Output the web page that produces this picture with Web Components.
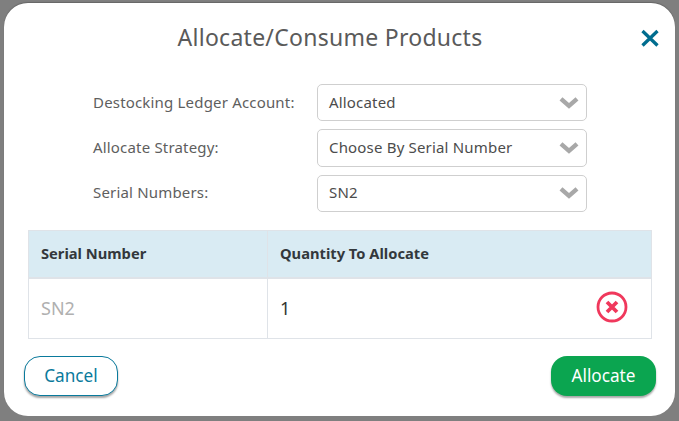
<!doctype html>
<html><head><meta charset="utf-8"><title>Allocate/Consume Products</title>
<style>
html,body{margin:0;height:100%;background:#7f7f7f}
body{font-family:"Noto Sans","Open Sans",sans-serif;overflow:hidden}
</style></head><body>
<template id="t-dialog"><style>
:host{display:flex;flex-direction:column;box-sizing:border-box;width:671px;height:413px;margin:3px 0 0 4px;background:#fff;border-radius:24px;position:relative;box-shadow:0 -1px 1px #666;color:#5b5b5b}
header{height:81px;display:flex;justify-content:center;padding-right:19px;box-sizing:border-box}
h1{margin:0;padding-top:17px;font-size:23px;line-height:34px;font-weight:400;letter-spacing:.27px;color:#5a5a5a}
.close{position:absolute;left:636px;top:25px;width:20px;height:20px}
.form{display:flex;flex-direction:column;gap:8px;padding-left:89px}
.table{margin:18px 23px 0 24px}
.foot{display:flex;justify-content:space-between;padding:17px 19px 0 20px}
</style>
<header><h1><slot name="title"></slot></h1></header>
<svg class="close" viewBox="0 0 20 20"><path d="M2.500 3 17.500 17.500M17.500 3 2.500 17.500" stroke="#006d8f" stroke-width="3.300" fill="none"/></svg>
<div class="form"><slot name="form"></slot></div>
<div class="table"><slot name="table"></slot></div>
<div class="foot"><slot name="actions"></slot></div>
</template>

<template id="t-field"><style>
:host{display:grid;grid-template-columns:224px 270px;align-items:center;font-size:15px}
label{color:#5e5e5e;letter-spacing:.18px;position:relative;top:-1.200px}
.sel{box-sizing:border-box;height:37.400px;border:1px solid #cfcfcf;border-radius:5px;display:flex;align-items:center;justify-content:space-between;padding:0 6.500px 0 11px;color:#4c4c4c;letter-spacing:.18px}
.sel span{position:relative;top:-1.200px}
svg{width:22px;height:14px}
</style>
<label><slot name="label"></slot></label>
<div class="sel"><span><slot></slot></span><svg viewBox="0 0 22 14"><path d="M3 2.800 11 9.800 19 2.800" fill="none" stroke="#a8a8a8" stroke-width="4.400"/></svg></div>
</template>

<template id="t-table"><style>
:host{display:block;box-sizing:border-box;height:109px;border:1px solid #dfe3e8;border-top-color:#dfe3e8}
.row{display:grid;grid-template-columns:238px 1fr}
.head{height:46px;background:#d9ebf3;border-bottom:2px solid #dfe3e8;box-sizing:content-box}
.cell{display:flex;align-items:center;padding-left:12px;box-sizing:border-box}
.cell+.cell{border-left:1px solid #dfe3e8}
.head .cell{font-size:14.700px;font-weight:700;color:#33383c;padding-bottom:3px}
.body{height:59px}
.body .cell{justify-content:space-between;padding-right:23px}
.sn{font-size:18px;color:#b0b0b0;padding-bottom:1px}
.qty{font-size:18px;color:#333;padding-bottom:2px}
svg{width:32px;height:32px;position:relative;top:-1px}
</style>
<div class="row head"><div class="cell"><slot name="h1"></slot></div><div class="cell"><slot name="h2"></slot></div></div>
<div class="row body"><div class="cell sn"><slot name="c1"></slot></div><div class="cell qty"><slot name="c2"></slot>
<svg viewBox="0 0 32 32"><circle cx="16" cy="16" r="14" fill="none" stroke="#f0385c" stroke-width="2.800"/><path d="M11 11 21 21M21 11 11 21" stroke="#f0385c" stroke-width="3.800" fill="none"/></svg></div></div>
</template>

<template id="t-btn"><style>
:host{display:flex;align-items:center;justify-content:center;box-sizing:border-box;height:40px;border-radius:16px;font-size:17.200px;box-shadow:0 2px 2px rgba(0,0,0,.35)}
span{position:relative;top:-1px}
:host([kind=ghost]){width:94px;background:#fff;color:#0a7a9c;border:1px solid #0a7a9c}
:host([kind=primary]){width:105px;background:#0ba550;color:#fff}
</style><span><slot></slot></span></template>

<x-dialog>
<span slot="title">Allocate/Consume Products</span>
<x-field slot="form"><span slot="label">Destocking Ledger Account:</span>Allocated</x-field>
<x-field slot="form"><span slot="label">Allocate Strategy:</span>Choose By Serial Number</x-field>
<x-field slot="form"><span slot="label">Serial Numbers:</span>SN2</x-field>
<x-table slot="table"><span slot="h1">Serial Number</span><span slot="h2">Quantity To Allocate</span><span slot="c1">SN2</span><span slot="c2">1</span></x-table>
<x-btn slot="actions" kind="ghost">Cancel</x-btn>
<x-btn slot="actions" kind="primary">Allocate</x-btn>
</x-dialog>
<script>
for (const [tag,id] of [['x-dialog','t-dialog'],['x-field','t-field'],['x-table','t-table'],['x-btn','t-btn']]) {
  customElements.define(tag,class extends HTMLElement{constructor(){super();this.attachShadow({mode:'open'}).appendChild(document.getElementById(id).content.cloneNode(true));}});
}
</script>
</body></html>
